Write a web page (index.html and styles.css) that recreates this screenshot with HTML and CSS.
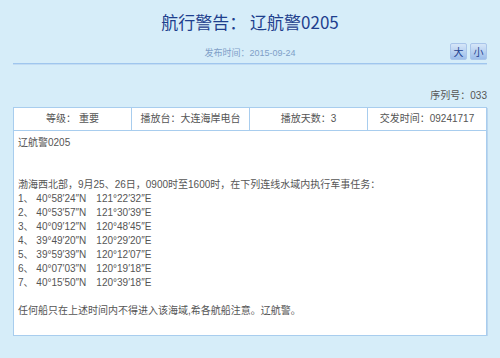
FILE: index.html
```html
<!DOCTYPE html>
<html lang="zh">
<head>
<meta charset="utf-8">
<title>航行警告</title>
<link rel="stylesheet" href="styles.css">
</head>
<body>
<div class="page">
  <h1 class="title">航行警告： 辽航警0205</h1>
  <div class="meta">
    <span class="date">发布时间：2015-09-24</span>
    <div class="sizes">
      <span class="size-btn">大</span>
      <span class="size-btn">小</span>
    </div>
  </div>
  <div class="serial">序列号：033</div>
  <div class="notice">
    <div class="info">
      <div class="cell">等级： 重要</div>
      <div class="cell">播放台：大连海岸电台</div>
      <div class="cell">播放天数：3</div>
      <div class="cell">交发时间：09241717</div>
    </div>
    <div class="body">
      <div class="line">辽航警0205</div>
      <div class="line"></div>
      <div class="line"></div>
      <div class="line">渤海西北部，9月25、26日，0900时至1600时，在下列连线水域内执行军事任务：</div>
      <div class="line">1、 40°58′24″N　121°22′32″E</div>
      <div class="line">2、 40°53′57″N　121°30′39″E</div>
      <div class="line">3、 40°09′12″N　120°48′45″E</div>
      <div class="line">4、 39°49′20″N　120°29′20″E</div>
      <div class="line">5、 39°59′39″N　120°12′07″E</div>
      <div class="line">6、 40°07′03″N　120°19′18″E</div>
      <div class="line">7、 40°15′50″N　120°39′18″E</div>
      <div class="line"></div>
      <div class="line">任何船只在上述时间内不得进入该海域,希各航船注意。辽航警。</div>
    </div>
  </div>
</div>
</body>
</html>
```

FILE: styles.css
```css
html, body {
  margin: 0;
  padding: 0;
  background: #d6edf9;
}
body {
  font-family: "Liberation Sans", "Noto Sans CJK SC", sans-serif;
  color: #555;
}
.page {
  padding: 10px 13px 0 13px;
}
.title {
  margin: 0;
  text-align: center;
  font-family: "Noto Sans CJK SC", "Liberation Sans", sans-serif;
  font-weight: normal;
  font-size: 17px;
  line-height: 24px;
  color: #1e3f8e;
}
.meta {
  position: relative;
  margin-top: 9px;
  height: 18px;
  display: flex;
  align-items: center;
  justify-content: center;
  border-bottom: 1px solid #9fc6ee;
  padding-bottom: 2px;
  box-shadow: 0 1px 0 #c2dcf3;
}
.date {
  font-size: 9px;
  color: #7f9fc8;
  font-family: "Liberation Sans", "Noto Sans CJK SC", sans-serif;
}
.sizes {
  position: absolute;
  right: 0;
  top: 0;
  display: flex;
  gap: 3px;
}
.size-btn {
  width: 15px;
  height: 15px;
  border: 1px solid #a9c5ea;
  border-radius: 2px;
  background: linear-gradient(#d6e6f8, #9cbdea);
  color: #1e3f8e;
  font-family: "Noto Sans CJK SC", sans-serif;
  font-size: 10px;
  line-height: 15px;
  text-align: center;
}
.serial {
  margin-top: 25px;
  text-align: right;
  font-size: 10px;
  line-height: 14px;
}
.notice {
  margin-top: 4px;
  background: #fff;
  border: 1px solid #a8cdee;
  box-shadow: 1px 1px 0 #bcd6ee;
}
.info {
  display: grid;
  grid-template-columns: repeat(4, 1fr);
  border-bottom: 1px solid #a8cdee;
}
.cell {
  height: 22px;
  line-height: 22px;
  text-align: center;
  font-size: 10px;
  border-right: 1px solid #a8cdee;
}
.cell:last-child {
  border-right: none;
}
.body {
  padding: 5px 4px 17px 4px;
  font-size: 10px;
}
.line {
  height: 14px;
  line-height: 14px;
  white-space: nowrap;
}
```
